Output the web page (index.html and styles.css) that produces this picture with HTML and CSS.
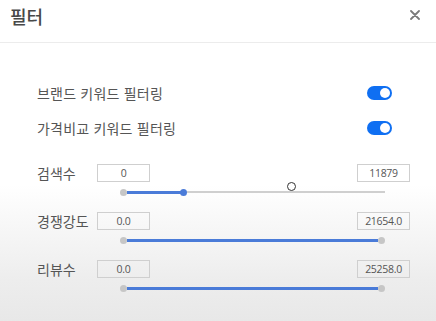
FILE: index.html
```html
<!DOCTYPE html>
<html lang="ko">
<head>
    <meta charset="UTF-8">
    <meta name="viewport" content="width=device-width, initial-scale=1.0">
    <title>필터</title>
    <link rel="stylesheet" href="styles.css">
</head>
<body>
    <div class="modal">
        <header class="modal-header">
            <h2 class="modal-title">필터</h2>
            <button class="close-btn" aria-label="닫기">
                <svg width="10" height="10" viewBox="0 0 10 10">
                    <path d="M1 1 L9 9 M9 1 L1 9" stroke="#7a7a7a" stroke-width="1.8" stroke-linecap="round"/>
                </svg>
            </button>
        </header>

        <div class="modal-body">
            <div class="toggle-list">
                <div class="toggle-row">
                    <span class="toggle-label">브랜드 키워드 필터링</span>
                    <span class="switch on"><span class="knob"></span></span>
                </div>
                <div class="toggle-row">
                    <span class="toggle-label">가격비교 키워드 필터링</span>
                    <span class="switch on"><span class="knob"></span></span>
                </div>
            </div>

            <div class="range-list">
                <div class="range-row">
                    <div class="range-label">검색수</div>
                    <div class="range-body">
                        <div class="range-inputs">
                            <div class="num-box">0</div>
                            <div class="num-box">11879</div>
                        </div>
                        <div class="track">
                            <span class="dot dot-left"></span>
                            <span class="fill" style="width: 55px"></span>
                            <span class="handle"></span>
                            <span class="rest"></span>
                            <span class="cursor-ring"></span>
                        </div>
                    </div>
                </div>

                <div class="range-row">
                    <div class="range-label">경쟁강도</div>
                    <div class="range-body">
                        <div class="range-inputs">
                            <div class="num-box">0.0</div>
                            <div class="num-box">21654.0</div>
                        </div>
                        <div class="track">
                            <span class="dot dot-left"></span>
                            <span class="fill full"></span>
                            <span class="dot dot-right"></span>
                        </div>
                    </div>
                </div>

                <div class="range-row">
                    <div class="range-label">리뷰수</div>
                    <div class="range-body">
                        <div class="range-inputs">
                            <div class="num-box">0.0</div>
                            <div class="num-box">25258.0</div>
                        </div>
                        <div class="track">
                            <span class="dot dot-left"></span>
                            <span class="fill full"></span>
                            <span class="dot dot-right"></span>
                        </div>
                    </div>
                </div>
            </div>
        </div>
    </div>
</body>
</html>
```

FILE: styles.css
```css
/* Filter modal */
body {
    margin: 0;
    padding: 0;
    font-family: "Noto Sans CJK KR", "Noto Sans", sans-serif;
    color: #555;
    background: linear-gradient(to bottom, #fff 0, #fff 185px, #ededed 280px, #e8e8e8 100%);
    min-height: 321px;
}

.modal {
    width: 436px;
    height: 321px;
    box-sizing: border-box;
}

.modal-header {
    height: 43px;
    box-sizing: border-box;
    border-bottom: 1px solid #ececec;
    display: flex;
    align-items: center;
    justify-content: space-between;
    padding: 0 16px 0 10px;
}

.modal-title {
    margin: 0;
    font-size: 18px;
    font-weight: 500;
    color: #484848;
    line-height: 1;
    margin-top: -10px;
}

.close-btn {
    border: none;
    background: none;
    padding: 0;
    width: 10px;
    height: 10px;
    margin-top: -13px;
    display: flex;
    cursor: pointer;
}

.modal-body {
    padding: 32px 0 0 37px;
}

.toggle-list {
    width: 355px;
}

.toggle-row {
    height: 35px;
    display: flex;
    align-items: center;
    justify-content: space-between;
}

.toggle-label {
    font-size: 14px;
    color: #555;
    letter-spacing: 0.2px;
}

.switch {
    width: 25px;
    height: 14px;
    border-radius: 7px;
    background: #ccc;
    display: flex;
    align-items: center;
    padding: 0 2px;
    box-sizing: border-box;
}

.switch.on {
    background: #0f6ff2;
    justify-content: flex-end;
}

.knob {
    width: 10px;
    height: 10px;
    border-radius: 50%;
    background: #fff;
}

.range-list {
    margin-top: 19px;
}

.range-row {
    display: flex;
    height: 48px;
}

.range-label {
    flex: none;
    width: 60px;
    height: 18px;
    line-height: 18px;
    font-size: 14px;
    color: #555;
}

.range-body {
    flex: none;
    width: 313px;
}

.range-inputs {
    display: flex;
    justify-content: space-between;
}

.num-box {
    width: 53px;
    height: 18px;
    box-sizing: border-box;
    border: 1px solid #cfcfcf;
    font-family: "Open Sans", "Noto Sans", sans-serif;
    font-size: 10.5px;
    line-height: 16px;
    text-align: center;
    color: #555;
    letter-spacing: -0.3px;
}

.track {
    position: relative;
    display: flex;
    align-items: center;
    height: 10px;
    margin: 5px 0 0 23px;
    width: 265px;
}

.dot {
    width: 7px;
    height: 7px;
    border-radius: 50%;
    background: #c6c6c6;
    flex: none;
}

.fill {
    height: 3px;
    background: #4a7bd8;
    flex: none;
}

.fill.full {
    flex: 1;
}

.handle {
    width: 7px;
    height: 7px;
    border-radius: 50%;
    background: #4a7bd8;
    flex: none;
    margin-left: -2px;
}

.rest {
    flex: 1;
    height: 2px;
    background: #cfcfcf;
}

.cursor-ring {
    position: absolute;
    left: 167px;
    top: -5px;
    width: 7px;
    height: 7px;
    border: 1.5px solid #333;
    border-radius: 50%;
    background: #fff;
}
```
